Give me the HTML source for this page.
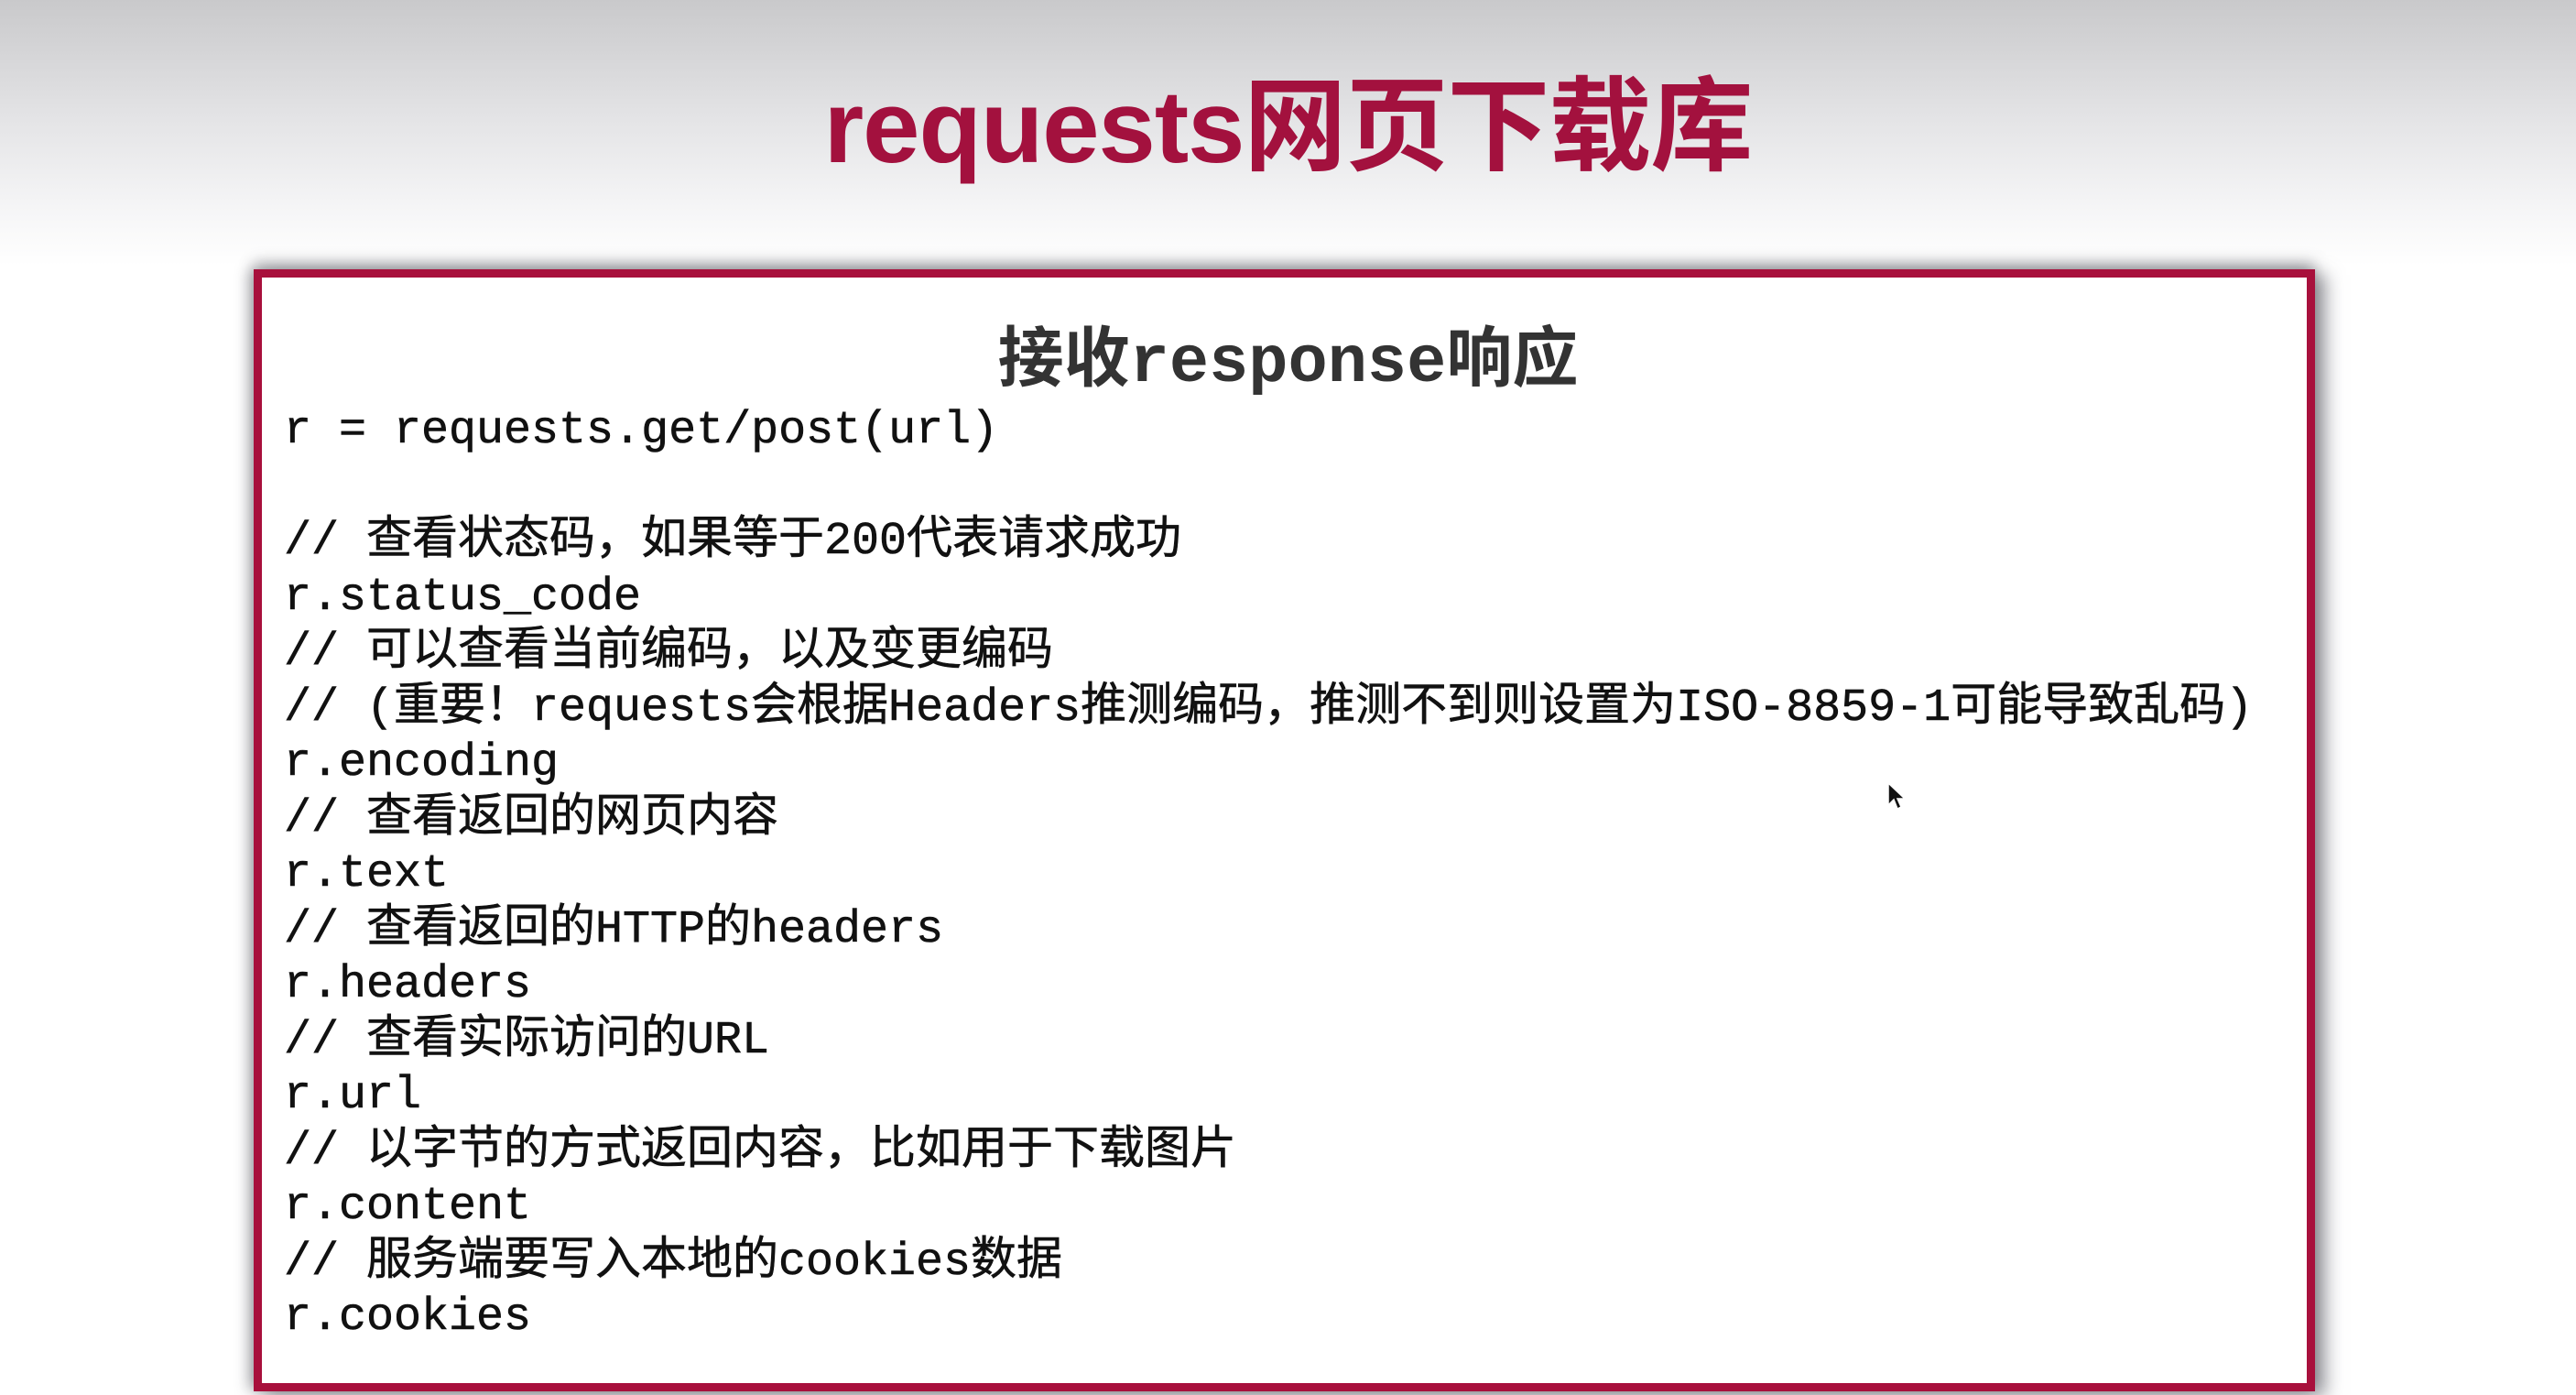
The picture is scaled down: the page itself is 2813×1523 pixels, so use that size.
<!DOCTYPE html>
<html><head><meta charset="utf-8"><style>
html,body{margin:0;padding:0}
body{width:2813px;height:1523px;position:relative;overflow:hidden;background:#fff;font-family:"Liberation Sans","Noto Sans CJK SC",sans-serif}
.hdr{position:absolute;left:0;top:0;width:2813px;height:290px;background:linear-gradient(#c9c9cb 0%,#e4e4e6 45%,#f6f6f7 80%,#fff 100%)}
.title{position:absolute;left:0;width:2813px;top:74px;text-align:center;font-size:112px;font-weight:bold;color:#a3113e;line-height:130px;letter-spacing:-1px}
.box{position:absolute;left:277px;top:294px;width:2233px;height:1207px;border:9px solid #a8103c;background:#fff;box-shadow:12px 6px 18px rgba(80,80,90,.55),-6px 0 14px rgba(80,80,90,.35),0 -8px 14px rgba(80,80,90,.35)}
.sub{position:absolute;left:0;width:2813px;top:352px;text-align:center;font-size:72px;font-weight:bold;color:#333;line-height:90px;font-family:"Liberation Mono","Noto Sans CJK SC",monospace}
.code{position:absolute;left:310px;top:441px;font-family:"Liberation Mono","Noto Sans CJK SC",monospace;font-size:50px;line-height:60.5px;color:#111;white-space:pre;-webkit-text-stroke:0.6px #111}
.cur{position:absolute;left:2060px;top:853px}
</style></head><body>
<div class="hdr"></div>
<div class="title">requests网页下载库</div>
<div class="box"></div>
<div class="sub">接收response响应</div>
<div class="code">r = requests.get/post(url)

// 查看状态码，如果等于200代表请求成功
r.status_code
// 可以查看当前编码，以及变更编码
// (重要！requests会根据Headers推测编码，推测不到则设置为ISO-8859-1可能导致乱码)
r.encoding
// 查看返回的网页内容
r.text
// 查看返回的HTTP的headers
r.headers
// 查看实际访问的URL
r.url
// 以字节的方式返回内容，比如用于下载图片
r.content
// 服务端要写入本地的cookies数据
r.cookies</div>
<svg class="cur" width="24" height="34" viewBox="0 0 24 34"><path d="M2 2 L2 26 L8 20 L12 30 L16 28 L12 19 L20 19 Z" fill="#111" stroke="#fff" stroke-width="1.5"/></svg>
</body></html>
